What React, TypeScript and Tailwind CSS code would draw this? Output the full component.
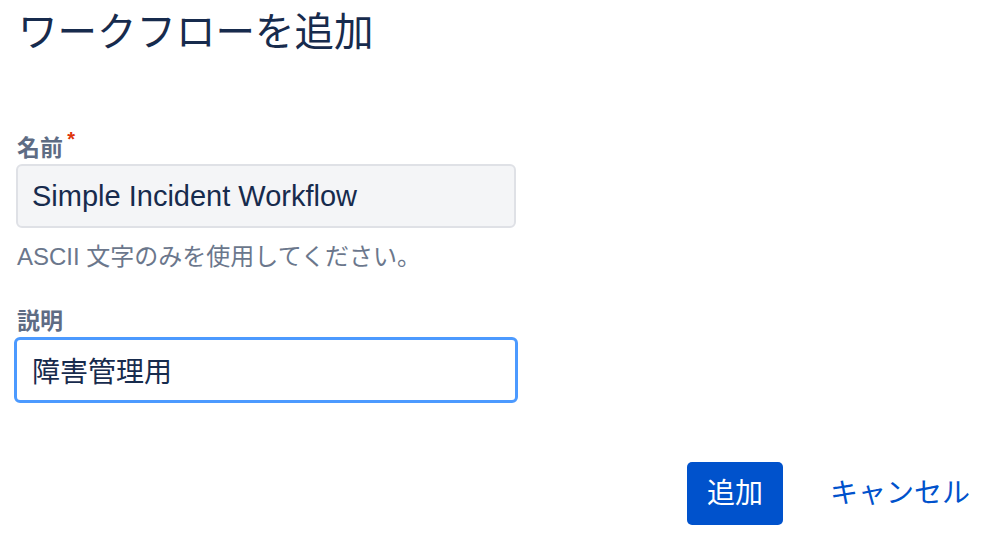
import React from 'react';

const font = { fontFamily: '"Liberation Sans", "Noto Sans CJK JP", sans-serif' };

export default function App() {
  return (
    <div className="w-[1000px] h-[546px] bg-white overflow-hidden" style={font}>
      <h1 className="pt-2 pl-[18px] text-[39.5px] leading-[48px] font-normal text-[#172b4d]">
        ワークフローを追加
      </h1>

      <form className="flex flex-col items-start">
        <label className="relative mt-[78px] ml-[17px] text-[23px] leading-[28px] font-bold text-[#5e6c84]">
          名前
          <span className="absolute -right-[12px] -top-[5px] text-[20px] leading-none text-[#de350b]">*</span>
        </label>
        <input
          type="text"
          defaultValue="Simple Incident Workflow"
          className="mt-[2px] ml-4 w-[500px] h-16 px-[14px] rounded-md border-2 border-[#dfe1e6] bg-[#f4f5f7] text-[29px] text-[#172b4d] outline-none"
          style={font}
        />
        <p className="mt-[15px] ml-[17px] text-[24px] leading-[28px] text-[#6b778c]">
          ASCII 文字のみを使用してください。
        </p>

        <label className="mt-[36px] ml-[17px] text-[23px] leading-[28px] font-bold text-[#5e6c84]">
          説明
        </label>
        <input
          type="text"
          defaultValue="障害管理用"
          className="mt-[2px] ml-[14px] w-[504px] h-[66px] px-[15px] rounded-md border-[3px] border-[#4c9aff] bg-white text-[28px] text-[#172b4d] outline-none"
          style={font}
        />

        <div className="mt-[59px] w-full flex items-center justify-end gap-[47px] pr-[30px]">
          <button
            type="button"
            className="w-[96px] h-[63px] rounded-[5px] bg-[#0052cc] text-white text-[28px]"
            style={font}
          >
            追加
          </button>
          <button type="button" className="text-[28px] text-[#0052cc]" style={font}>
            キャンセル
          </button>
        </div>
      </form>
    </div>
  );
}
